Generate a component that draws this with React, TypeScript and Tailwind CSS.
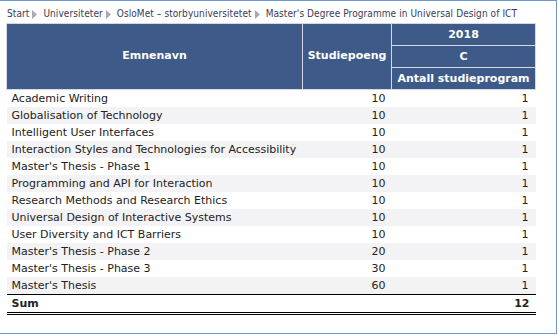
import React from "react";

const rows: [string, number, number][] = [
  ["Academic Writing", 10, 1],
  ["Globalisation of Technology", 10, 1],
  ["Intelligent User Interfaces", 10, 1],
  ["Interaction Styles and Technologies for Accessibility", 10, 1],
  ["Master's Thesis - Phase 1", 10, 1],
  ["Programming and API for Interaction", 10, 1],
  ["Research Methods and Research Ethics", 10, 1],
  ["Universal Design of Interactive Systems", 10, 1],
  ["User Diversity and ICT Barriers", 10, 1],
  ["Master's Thesis - Phase 2", 20, 1],
  ["Master's Thesis - Phase 3", 30, 1],
  ["Master's Thesis", 60, 1],
];

function Arrow() {
  return (
    <svg width="5" height="9" viewBox="0 0 5 9" className="ml-[3px] mr-[6px] shrink-0 inline-block">
      <path d="M0 0 L5 4.5 L0 9 Z" fill="#a9a9b0" />
    </svg>
  );
}

export default function App() {
  const crumbs = [
    "Start",
    "Universiteter",
    "OsloMet – storbyuniversitetet",
    "Master's Degree Programme in Universal Design of ICT",
  ];
  return (
    <div
      className="w-[557px] h-[334px] bg-white border-t border-r border-b border-[#6f98cb] overflow-hidden"
      style={{ fontFamily: "'DejaVu Sans', Verdana, sans-serif" }}
    >
      <div
        className="pl-[7px] pt-[4px] h-[22px] flex items-center text-[10px] tracking-[0.08px] text-[#3b3b55] leading-[14px] whitespace-nowrap"
        style={{ fontFamily: "'DejaVu Sans Condensed', 'Liberation Sans', sans-serif" }}
      >
        {crumbs.map((c, i) => (
          <React.Fragment key={i}>
            {i > 0 && <Arrow />}
            <span className="shrink-0">{c}</span>
          </React.Fragment>
        ))}
      </div>
      <table className="ml-[6px] w-[529px] table-fixed border-collapse text-[11px] text-[#222]">
        <colgroup>
          <col className="w-[296px]" />
          <col className="w-[89px]" />
          <col className="w-[144px]" />
        </colgroup>
        <thead>
          <tr className="h-[21px]">
            <th
              rowSpan={3}
              className="bg-[#3e5a89] text-white font-bold border border-[#d4d8e0] text-center align-middle p-0"
            >
              Emnenavn
            </th>
            <th
              rowSpan={3}
              className="bg-[#3e5a89] text-white font-bold border border-[#d4d8e0] text-center align-middle p-0"
            >
              Studiepoeng
            </th>
            <th className="bg-[#3e5a89] text-white font-bold border border-[#d4d8e0] text-center p-0 leading-[21px]">
              2018
            </th>
          </tr>
          <tr className="h-[21px]">
            <th className="bg-[#3e5a89] text-white font-bold border border-[#d4d8e0] text-center p-0 leading-[21px]">
              C
            </th>
          </tr>
          <tr className="h-[21px]">
            <th className="bg-[#3e5a89] text-white font-bold border border-[#d4d8e0] text-center p-0 whitespace-nowrap leading-[21px]">
              Antall studieprogram
            </th>
          </tr>
        </thead>
        <tbody>
          {rows.map(([name, sp, n], i) => (
            <tr key={i} className={`h-[17px] ${i % 2 === 1 ? "bg-[#f3f3f5]" : "bg-white"}`}>
              <td className="pl-[5px] pt-[1px] pb-0 leading-[16px] whitespace-nowrap">{name}</td>
              <td className="pr-[6px] pt-[1px] pb-0 text-right leading-[16px]">{sp}</td>
              <td className="pr-[7px] pt-[1px] pb-0 text-right leading-[16px]">{n}</td>
            </tr>
          ))}
          <tr className="h-[17px] border-t border-black border-b-[3px] border-b-black border-double">
            <td className="pl-[5px] pt-[1px] pb-0 font-bold leading-[16px]">Sum</td>
            <td></td>
            <td className="pr-[6px] pt-[1px] pb-0 text-right font-bold leading-[16px]">12</td>
          </tr>
        </tbody>
      </table>
    </div>
  );
}
